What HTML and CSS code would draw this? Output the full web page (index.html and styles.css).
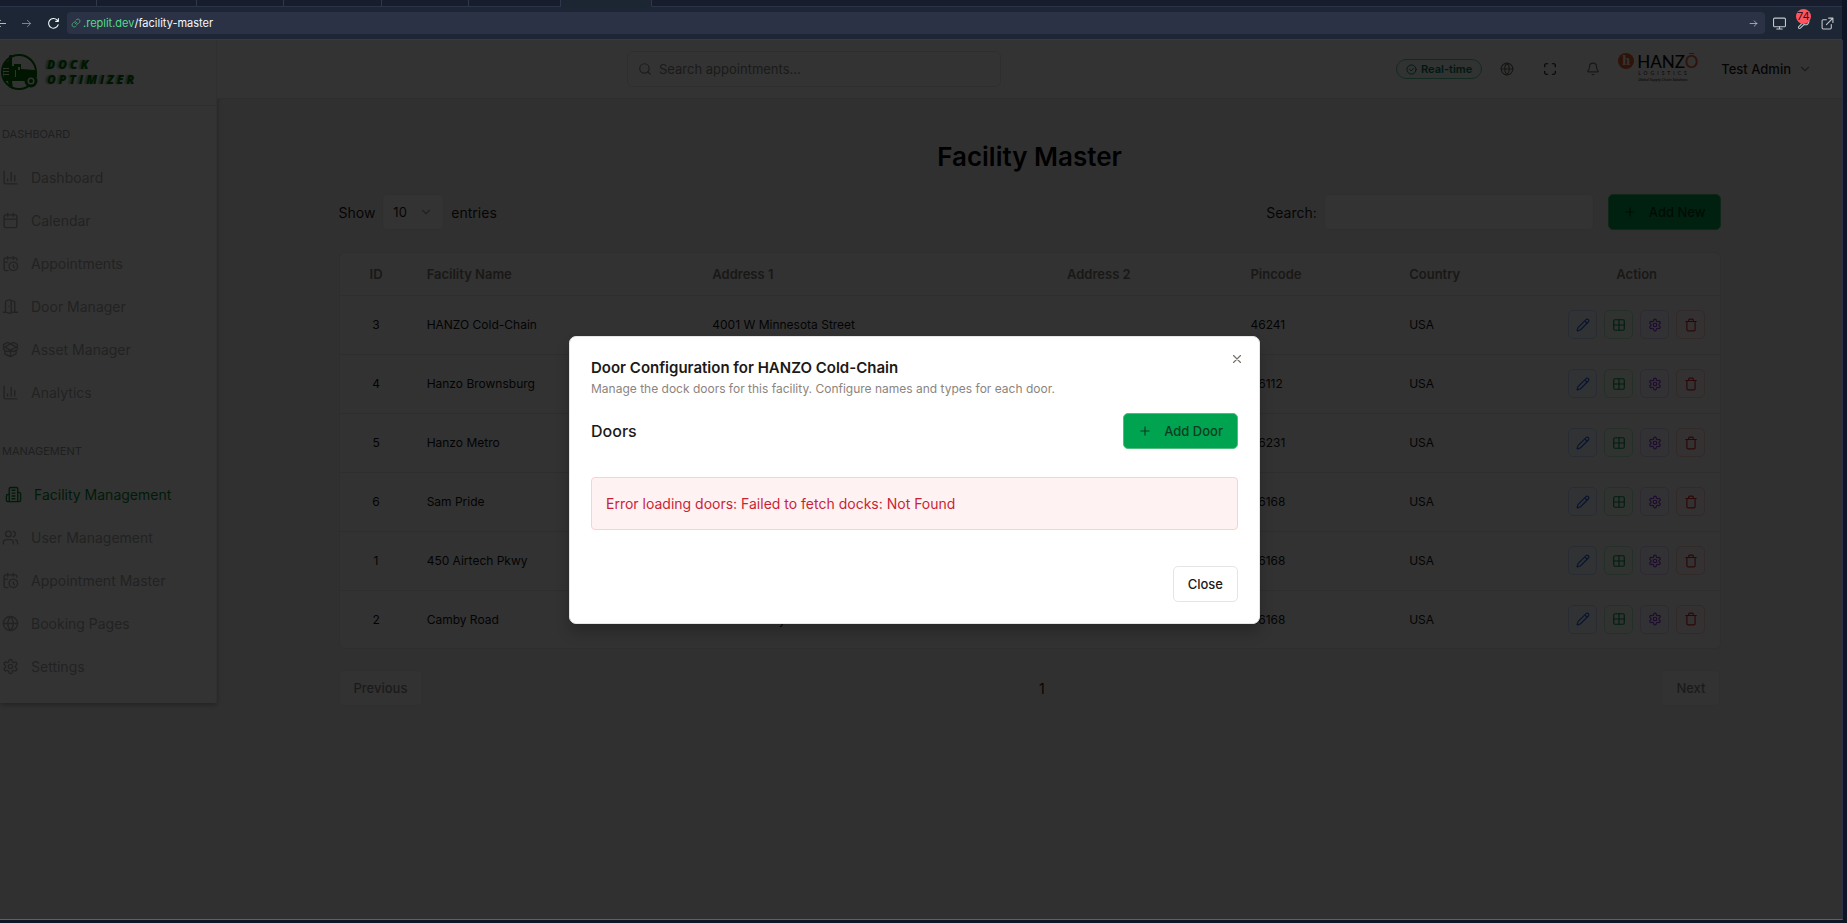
FILE: index.html
```html
<!DOCTYPE html>
<html lang="en">
<head>
<meta charset="utf-8">
<title>Facility Master</title>
<link rel="stylesheet" href="styles.css">
</head>
<body>
<svg class="sprite" aria-hidden="true">
  <symbol id="i-chart" viewBox="0 0 24 24"><path d="M3 3v16a2 2 0 0 0 2 2h16M18 17V9M13 17V5M8 17v-3"/></symbol>
  <symbol id="i-calendar" viewBox="0 0 24 24"><path d="M8 2v4M16 2v4M3 10h18"/><rect width="18" height="18" x="3" y="4" rx="2"/></symbol>
  <symbol id="i-calclock" viewBox="0 0 24 24"><path d="M21 7.5V6a2 2 0 0 0-2-2H5a2 2 0 0 0-2 2v14a2 2 0 0 0 2 2h3.500M16 2v4M8 2v4M3 10h5M17.500 17.500 16 16.300V14"/><circle cx="16" cy="16" r="6"/></symbol>
  <symbol id="i-door" viewBox="0 0 24 24"><path d="M13 4h3a2 2 0 0 1 2 2v14M2 20h3M13 20h9M10 12v.01M13 4.560v16.160a1 1 0 0 1-1.240.970L5 20V5.560a2 2 0 0 1 1.520-1.940l4-1A2 2 0 0 1 13 4.560Z"/></symbol>
  <symbol id="i-box" viewBox="0 0 24 24"><path d="M12 22v-9M15.170 2.210a1.670 1.670 0 0 1 1.630 0L21 4.570a1.930 1.930 0 0 1 0 3.360L8.820 14.790a1.655 1.655 0 0 1-1.640 0L3 12.430a1.930 1.930 0 0 1 0-3.360zM20 13v3.870a2.060 2.060 0 0 1-1.110 1.830l-6 3.080a1.930 1.930 0 0 1-1.780 0l-6-3.080A2.060 2.060 0 0 1 4 16.870V13M21 12.430a1.930 1.930 0 0 0 0-3.360L8.830 2.200a1.640 1.640 0 0 0-1.630 0L3 4.570a1.930 1.930 0 0 0 0 3.360l12.180 6.860a1.636 1.636 0 0 0 1.630 0z"/></symbol>
  <symbol id="i-building" viewBox="0 0 24 24"><path d="M6 22V4a2 2 0 0 1 2-2h8a2 2 0 0 1 2 2v18ZM6 12H4a2 2 0 0 0-2 2v6a2 2 0 0 0 2 2h2M18 9h2a2 2 0 0 1 2 2v9a2 2 0 0 1-2 2h-2M10 6h4M10 10h4M10 14h4M10 18h4"/></symbol>
  <symbol id="i-users" viewBox="0 0 24 24"><path d="M16 21v-2a4 4 0 0 0-4-4H6a4 4 0 0 0-4 4v2M22 21v-2a4 4 0 0 0-3-3.870M16 3.130a4 4 0 0 1 0 7.750"/><circle cx="9" cy="7" r="4"/></symbol>
  <symbol id="i-globe" viewBox="0 0 24 24"><circle cx="12" cy="12" r="10"/><path d="M12 2a14.500 14.500 0 0 0 0 20 14.500 14.500 0 0 0 0-20M2 12h20"/></symbol>
  <symbol id="i-gear" viewBox="0 0 24 24"><path d="M12.220 2h-.44a2 2 0 0 0-2 2v.18a2 2 0 0 1-1 1.730l-.43.25a2 2 0 0 1-2 0l-.15-.08a2 2 0 0 0-2.730.73l-.22.38a2 2 0 0 0 .73 2.730l.15.1a2 2 0 0 1 1 1.720v.51a2 2 0 0 1-1 1.740l-.15.09a2 2 0 0 0-.73 2.730l.22.38a2 2 0 0 0 2.730.73l.15-.08a2 2 0 0 1 2 0l.43.25a2 2 0 0 1 1 1.730V20a2 2 0 0 0 2 2h.44a2 2 0 0 0 2-2v-.18a2 2 0 0 1 1-1.730l.43-.25a2 2 0 0 1 2 0l.15.08a2 2 0 0 0 2.730-.73l.22-.39a2 2 0 0 0-.73-2.730l-.15-.08a2 2 0 0 1-1-1.740v-.5a2 2 0 0 1 1-1.740l.15-.09a2 2 0 0 0 .73-2.730l-.22-.38a2 2 0 0 0-2.730-.73l-.15.08a2 2 0 0 1-2 0l-.43-.25a2 2 0 0 1-1-1.730V4a2 2 0 0 0-2-2z"/><circle cx="12" cy="12" r="3"/></symbol>
  <symbol id="i-search" viewBox="0 0 24 24"><circle cx="11" cy="11" r="8"/><path d="m21 21-4.300-4.300"/></symbol>
  <symbol id="i-check" viewBox="0 0 24 24"><circle cx="12" cy="12" r="10"/><path d="m8 12 3 3 5-5"/></symbol>
  <symbol id="i-expand" viewBox="0 0 24 24"><path d="M8 3H5a2 2 0 0 0-2 2v3M21 8V5a2 2 0 0 0-2-2h-3M3 16v3a2 2 0 0 0 2 2h3M16 21h3a2 2 0 0 0 2-2v-3"/></symbol>
  <symbol id="i-bell" viewBox="0 0 24 24"><path d="M10.300 21a2 2 0 0 0 3.400 0M3.260 15.330A1 1 0 0 0 4 17h16a1 1 0 0 0 .74-1.670C19.410 13.960 18 12.500 18 8A6 6 0 0 0 6 8c0 4.500-1.410 5.960-2.740 7.330"/></symbol>
  <symbol id="i-down" viewBox="0 0 24 24"><path d="m6 9 6 6 6-6"/></symbol>
  <symbol id="i-plus" viewBox="0 0 24 24"><path d="M5 12h14M12 5v14"/></symbol>
  <symbol id="i-x" viewBox="0 0 24 24"><path d="M18 6 6 18M6 6l12 12"/></symbol>
  <symbol id="i-pencil" viewBox="0 0 24 24"><path d="M21.170 6.810a1 1 0 0 0-3.990-3.990L3.840 16.170a2 2 0 0 0-.5.830l-1.320 4.350a.5.5 0 0 0 .62.620l4.350-1.320a2 2 0 0 0 .83-.5zM15 5l4 4"/></symbol>
  <symbol id="i-grid" viewBox="0 0 24 24"><rect width="18" height="18" x="3" y="3" rx="2"/><path d="M3 12h18M12 3v18"/></symbol>
  <symbol id="i-trash" viewBox="0 0 24 24"><path d="M3 6h18M19 6v14a2 2 0 0 1-2 2H7a2 2 0 0 1-2-2V6M8 6V4a2 2 0 0 1 2-2h4a2 2 0 0 1 2 2v2"/></symbol>
  <symbol id="i-left" viewBox="0 0 24 24"><path d="M21 12H3M10 5l-7 7 7 7"/></symbol>
  <symbol id="i-right" viewBox="0 0 24 24"><path d="M3 12h18M14 5l7 7-7 7"/></symbol>
  <symbol id="i-reload" viewBox="0 0 24 24"><path d="M20.500 14.500A9 9 0 1 1 18.500 5.500L21 8M21 3v5h-5"/></symbol>
  <symbol id="i-link" viewBox="0 0 24 24"><path d="M10 13a5 5 0 0 0 7.500.5l3-3a5 5 0 0 0-7-7l-1.700 1.700M14 11a5 5 0 0 0-7.500-.5l-3 3a5 5 0 0 0 7 7l1.700-1.700"/></symbol>
  <symbol id="i-monitor" viewBox="0 0 24 24"><rect x="1" y="2" width="22" height="16" rx="2"/><path d="M12 18v4M7 22h10"/></symbol>
  <symbol id="i-wrench" viewBox="0 0 24 24"><path d="M14.500 6.500a1 1 0 0 0 0 1.400l1.600 1.600a1 1 0 0 0 1.400 0l3.800-3.800a6 6 0 0 1-8 8l-7 7a2 2 0 0 1-3-3l7-7a6 6 0 0 1 8-8z"/></symbol>
  <symbol id="i-popout" viewBox="0 0 24 24"><path d="M14 2h8v8M22 2 10 14M10 5H4a2 2 0 0 0-2 2v13a2 2 0 0 0 2 2h13a2 2 0 0 0 2-2v-6"/></symbol>
</svg>

<div class="browser">
  <div class="tabs"><span class="tab t1"></span><span class="tab t2"></span><span class="tab t3"></span><span class="tab t4"></span><span class="tab t3"></span><span class="tab t5"></span><span class="tab active"></span><span class="tab rest"></span></div>
  <div class="toolbar">
    <button class="tool back" aria-label="Back"><svg class="icon"><use href="#i-left"/></svg></button>
    <button class="tool forward" aria-label="Forward"><svg class="icon"><use href="#i-right"/></svg></button>
    <button class="tool reload" aria-label="Reload"><svg class="icon"><use href="#i-reload"/></svg></button>
    <div class="address"><svg class="icon link"><use href="#i-link"/></svg><span class="host">.replit.dev</span><span class="path">/facility-master</span><svg class="icon go"><use href="#i-right"/></svg></div>
    <button class="tool" aria-label="Screen size"><svg class="icon"><use href="#i-monitor"/></svg></button>
    <button class="tool dev" aria-label="Developer tools"><svg class="icon"><use href="#i-wrench"/></svg><span class="count">74</span></button>
    <button class="tool" aria-label="Open in new tab"><svg class="icon"><use href="#i-popout"/></svg></button>
  </div>

  <div class="view">
    <div class="app">
      <aside class="sidebar">
        <a class="logo" href="#" aria-label="Dock Optimizer">
          <svg class="logo-mark" viewBox="0 0 38 38"><circle cx="19" cy="19" r="17" fill="none" stroke="currentColor" stroke-width="2"/><path fill="currentColor" d="M3 12 9 7V3l1-1h2v11h2v-2h7v5l14 1 2 2v5l-2 1a6 6 0 0 0-10 3H12l1 8-4-2-1-6H4z"/><path fill="#fff" d="M15 17h1v7h-1zM18 14h2v3h-2zM3 15h6v1H3zM3 18h6v1H3zM3 21h6v1H3z"/><circle cx="31" cy="28" r="5" fill="#fff" stroke="currentColor" stroke-width="3"/><circle cx="31" cy="28" r="2" fill="currentColor"/></svg>
          <span class="logo-text"><span>DOCK</span><span>OPTIMIZER</span></span>
        </a>
        <nav class="nav">
          <h2>DASHBOARD</h2>
          <a href="#"><svg class="icon"><use href="#i-chart"/></svg>Dashboard</a>
          <a href="#"><svg class="icon"><use href="#i-calendar"/></svg>Calendar</a>
          <a href="#"><svg class="icon"><use href="#i-calclock"/></svg>Appointments</a>
          <a href="#"><svg class="icon"><use href="#i-door"/></svg>Door Manager</a>
          <a href="#"><svg class="icon"><use href="#i-box"/></svg>Asset Manager</a>
          <a href="#"><svg class="icon"><use href="#i-chart"/></svg>Analytics</a>
        </nav>
        <nav class="nav">
          <h2>MANAGEMENT</h2>
          <a href="#" class="current"><svg class="icon"><use href="#i-building"/></svg>Facility Management</a>
          <a href="#"><svg class="icon"><use href="#i-users"/></svg>User Management</a>
          <a href="#"><svg class="icon"><use href="#i-calclock"/></svg>Appointment Master</a>
          <a href="#"><svg class="icon"><use href="#i-globe"/></svg>Booking Pages</a>
          <a href="#"><svg class="icon"><use href="#i-gear"/></svg>Settings</a>
        </nav>
      </aside>

      <div class="column">
        <header class="header">
          <label class="search"><svg class="icon"><use href="#i-search"/></svg><input type="search" placeholder="Search appointments..." aria-label="Search appointments"></label>
          <div class="header-tools">
            <span class="badge"><svg class="icon"><use href="#i-check"/></svg>Real-time</span>
            <button class="ghost" aria-label="Language"><svg class="icon"><use href="#i-globe"/></svg></button>
            <button class="ghost dark" aria-label="Full screen"><svg class="icon"><use href="#i-expand"/></svg></button>
            <button class="ghost" aria-label="Notifications"><svg class="icon"><use href="#i-bell"/></svg></button>
            <div class="hanzo">
              <span class="hanzo-mark">h</span>
              <span class="hanzo-text"><b>HANZ<i>Ō</i></b><span class="sub">LOGISTICS</span><em>Global Supply Chain Solutions</em></span>
            </div>
            <button class="user">Test Admin<svg class="icon"><use href="#i-down"/></svg></button>
          </div>
        </header>

        <main class="main">
          <h1>Facility Master</h1>
          <div class="controls">
            <label class="show">Show <span class="select"><select><option>10</option></select><svg class="icon"><use href="#i-down"/></svg></span> entries</label>
            <div class="right">
              <label class="find">Search: <input type="text"></label>
              <button class="primary"><svg class="icon"><use href="#i-plus"/></svg>Add New</button>
            </div>
          </div>
          <div class="card">
            <table>
              <colgroup><col class="c-id"><col class="c-name"><col class="c-addr"><col class="c-addr2"><col class="c-pin"><col class="c-country"><col class="c-action"></colgroup>
              <thead><tr><th class="mid">ID</th><th>Facility Name</th><th>Address 1</th><th>Address 2</th><th>Pincode</th><th>Country</th><th class="mid">Action</th></tr></thead>
              <tbody>
                <tr><td class="mid">3</td><td>HANZO Cold-Chain</td><td>4001 W Minnesota Street</td><td></td><td>46241</td><td>USA</td><td><div class="actions"><button class="edit" aria-label="Edit"><svg class="icon"><use href="#i-pencil"/></svg></button><button class="doors" aria-label="Doors"><svg class="icon"><use href="#i-grid"/></svg></button><button class="config" aria-label="Settings"><svg class="icon"><use href="#i-gear"/></svg></button><button class="delete" aria-label="Delete"><svg class="icon"><use href="#i-trash"/></svg></button></div></td></tr>
                <tr><td class="mid">4</td><td>Hanzo Brownsburg</td><td></td><td></td><td>46112</td><td>USA</td><td><div class="actions"><button class="edit" aria-label="Edit"><svg class="icon"><use href="#i-pencil"/></svg></button><button class="doors" aria-label="Doors"><svg class="icon"><use href="#i-grid"/></svg></button><button class="config" aria-label="Settings"><svg class="icon"><use href="#i-gear"/></svg></button><button class="delete" aria-label="Delete"><svg class="icon"><use href="#i-trash"/></svg></button></div></td></tr>
                <tr><td class="mid">5</td><td>Hanzo Metro</td><td></td><td></td><td>46231</td><td>USA</td><td><div class="actions"><button class="edit" aria-label="Edit"><svg class="icon"><use href="#i-pencil"/></svg></button><button class="doors" aria-label="Doors"><svg class="icon"><use href="#i-grid"/></svg></button><button class="config" aria-label="Settings"><svg class="icon"><use href="#i-gear"/></svg></button><button class="delete" aria-label="Delete"><svg class="icon"><use href="#i-trash"/></svg></button></div></td></tr>
                <tr><td class="mid">6</td><td>Sam Pride</td><td></td><td></td><td>46168</td><td>USA</td><td><div class="actions"><button class="edit" aria-label="Edit"><svg class="icon"><use href="#i-pencil"/></svg></button><button class="doors" aria-label="Doors"><svg class="icon"><use href="#i-grid"/></svg></button><button class="config" aria-label="Settings"><svg class="icon"><use href="#i-gear"/></svg></button><button class="delete" aria-label="Delete"><svg class="icon"><use href="#i-trash"/></svg></button></div></td></tr>
                <tr><td class="mid">1</td><td>450 Airtech Pkwy</td><td></td><td></td><td>46168</td><td>USA</td><td><div class="actions"><button class="edit" aria-label="Edit"><svg class="icon"><use href="#i-pencil"/></svg></button><button class="doors" aria-label="Doors"><svg class="icon"><use href="#i-grid"/></svg></button><button class="config" aria-label="Settings"><svg class="icon"><use href="#i-gear"/></svg></button><button class="delete" aria-label="Delete"><svg class="icon"><use href="#i-trash"/></svg></button></div></td></tr>
                <tr><td class="mid">2</td><td>Camby Road</td><td>8600 Camby Road</td><td></td><td>46168</td><td>USA</td><td><div class="actions"><button class="edit" aria-label="Edit"><svg class="icon"><use href="#i-pencil"/></svg></button><button class="doors" aria-label="Doors"><svg class="icon"><use href="#i-grid"/></svg></button><button class="config" aria-label="Settings"><svg class="icon"><use href="#i-gear"/></svg></button><button class="delete" aria-label="Delete"><svg class="icon"><use href="#i-trash"/></svg></button></div></td></tr>
              </tbody>
            </table>
          </div>
          <div class="pager"><button class="outline" disabled>Previous</button><span>1</span><button class="outline" disabled>Next</button></div>
        </main>
      </div>
    </div>

    <div class="overlay">
      <section class="dialog" role="dialog" aria-labelledby="dialog-title">
        <button class="dismiss" aria-label="Dismiss"><svg class="icon"><use href="#i-x"/></svg></button>
        <h2 id="dialog-title">Door Configuration for HANZO Cold-Chain</h2>
        <p class="hint">Manage the dock doors for this facility. Configure names and types for each door.</p>
        <div class="dialog-bar"><h3>Doors</h3><button class="primary"><svg class="icon"><use href="#i-plus"/></svg>Add Door</button></div>
        <p class="error">Error loading doors: Failed to fetch docks: Not Found</p>
        <div class="dialog-foot"><button class="outline">Close</button></div>
      </section>
    </div>
  </div>
</div>
</body>
</html>
```
FILE: styles.css
```css
* { box-sizing: border-box; }
body, h1, h2, h3, p { margin: 0; }
body { font-family: Inter, "Liberation Sans", sans-serif; font-size: 14px; color: #1c1917; background: #0e1525; }
button, input, select { font: inherit; color: inherit; margin: 0; }
button { display: inline-flex; align-items: center; justify-content: center; padding: 0; border: 0; background: none; }
a { color: inherit; text-decoration: none; }
.sprite { display: none; }
.icon { flex: none; width: 18px; height: 18px; fill: none; stroke: currentColor; stroke-width: 2; stroke-linecap: round; stroke-linejoin: round; }

/* Browser frame */
.browser { display: flex; flex-direction: column; height: 100vh; overflow: hidden; }
.tabs { display: flex; height: 7px; background: #171d2d; margin-right: 5px; }
.tab { flex: none; border-right: 1px solid #2f384b; border-bottom: 1px solid #2b3447; }
.t1 { width: 97px; }
.t2 { width: 100px; }
.t3 { width: 87px; }
.t4 { width: 98px; }
.t5 { width: 92px; }
.tab.active { width: 91px; background: #1c2633; border-bottom-color: #1c2633; }
.tab.rest { flex: 1; border-right: 0; }
.toolbar { display: flex; align-items: center; height: 33px; margin-right: 5px; padding-right: 3px; background: #1c2634; border-bottom: 1px solid #2b3b5b; color: #c2c8cc; }
.tool { width: 24px; height: 24px; }
.tool .icon { width: 13px; height: 13px; }
.tool.back { width: 7px; justify-content: flex-end; overflow: hidden; }
.tool.back .icon { width: 11px; height: 11px; }
.tool.forward { width: 38px; color: #828c99; }
.tool.forward .icon { width: 11px; height: 11px; }
.tool.reload { width: 16px; color: #f5f9fc; }
.address { display: flex; align-items: center; flex: 1; height: 22px; margin: 0 2px 0 6px; padding: 0 7px 0 4px; border-radius: 4px; background: #2b3245; font-size: 11px; }
.address .link { width: 10px; height: 10px; margin-right: 2px; color: #44b36c; }
.host { color: #57d98a; }
.path { color: #f5f9fc; }
.address .go { width: 9px; height: 9px; margin-left: auto; }
.dev { position: relative; }
.count { position: absolute; top: -2px; left: 5px; height: 15px; padding: 0 1px; border-radius: 8px; background: #ff5560; color: #38101a; font-size: 11px; line-height: 15px; }
.view { position: relative; flex: 1; margin: 0 4px 3px 0; border-right: 1px solid #2b3245; border-bottom: 1px solid #5f6062; overflow: hidden; background: #f1f1f1; }

/* App shell */
.app { display: flex; align-items: flex-start; height: 100%; }
.sidebar { width: 217px; flex: none; padding-bottom: 15px; background: #fff; box-shadow: 0 2px 5px rgba(0, 0, 0, .3); border-right: 1px solid #eee; }
.logo { display: flex; align-items: center; gap: 9px; height: 66px; padding-bottom: 2px; border-bottom: 1px solid #e5e5e5; color: #006f08; }
.logo-mark { width: 38px; height: 38px; }
.logo-text { display: flex; flex-direction: column; font: italic 900 12px/15px "Open Sans", sans-serif; letter-spacing: 3px; }
.logo-text span { width: max-content; text-shadow: -2px 0 2px rgba(0, 111, 8, .5); }
.nav { padding-top: 18px; color: #aaa; }
.nav + .nav { padding-top: 27px; }
.nav h2 { padding: 0 0 12px 2px; font-size: 11px; font-weight: 400; line-height: 20px; color: #999; }
.nav a { display: flex; align-items: center; gap: 12px; height: 43px; padding-left: 2px; }
.nav .icon { width: 17px; height: 17px; }
.nav .current { padding-left: 5px; color: #008b30; }

.column { flex: 1; min-width: 0; }
.header { display: flex; align-items: center; justify-content: space-between; height: 59px; padding: 0 30px 0 410px; background: #fff; border-bottom: 1px solid #e5e5e5; }
.search { display: flex; align-items: center; gap: 7px; width: 374px; height: 36px; padding: 0 10px; border: 1px solid #e5e5e5; border-radius: 6px; color: #888; }
.search .icon { width: 14px; height: 14px; }
.search input { flex: 1; min-width: 0; padding: 0; border: 0; outline: 0; background: none; font-size: 13px; }
.search input::placeholder { color: #8a8580; opacity: 1; }
.header-tools { display: flex; align-items: center; color: #77716c; }
.badge { display: flex; align-items: center; gap: 4px; height: 20px; margin-right: 3px; padding: 0 9px; border: 1px solid #62cc99; border-radius: 10px; background: #effcf6; color: #047857; font-size: 11px; font-weight: 600; }
.badge .icon { width: 11px; height: 11px; }
.ghost { width: 43px; height: 36px; }
.ghost .icon { width: 14px; height: 14px; }
.ghost.dark { color: #111; }
.hanzo { display: flex; width: 78px; height: 32px; margin-left: 4px; color: #111; }
.hanzo-mark { flex: none; width: 16px; height: 16px; border-radius: 50%; background: #e8622a; color: #fff; font: 700 14px/15px "Liberation Serif", serif; text-align: center; }
.hanzo-text { display: flex; flex-direction: column; padding-left: 3px; white-space: nowrap; }
.hanzo b { font: 500 17px/17px Lato, sans-serif; }
.hanzo i { font-style: normal; color: #e8622a; }
.hanzo .sub { padding-left: 1px; font: 5px/7px Lato, sans-serif; letter-spacing: 3px; }
.hanzo em { padding-left: 1px; font: italic 4px/6px Lato, sans-serif; }
.user { gap: 7px; margin-left: 25px; font-size: 13px; font-weight: 500; color: #1c1917; }
.user .icon { width: 14px; height: 14px; color: #888; }

.main { max-width: 1382px; margin: 0 auto; padding-top: 40px; }
h1 { font-size: 26px; line-height: 36px; font-weight: 600; text-align: center; color: #000; }
.controls { display: flex; align-items: center; justify-content: space-between; margin: 19px 0 22px; }
.show, .find { display: flex; align-items: center; gap: 7px; }
.select { display: flex; align-items: center; position: relative; width: 62px; height: 36px; border: 1px solid #e7e5e4; border-radius: 5px; background: #fff; font-size: 13px; }
.select select { width: 100%; height: 100%; padding-left: 10px; border: 0; appearance: none; background: none; }
.select .icon { position: absolute; right: 10px; width: 14px; height: 14px; color: #999; }
.right { display: flex; gap: 14px; }
.find input { width: 270px; height: 36px; border: 1px solid #e7e5e4; border-radius: 5px; background: #fff; }
.primary { gap: 12px; height: 36px; padding: 0 14px; border: 1px solid #50bd7e; border-radius: 5px; background: #00a350; color: #0d3d20; font-size: 13px; font-weight: 500; }
.primary .icon { width: 14px; height: 14px; }

.card { border: 1px solid #e3e3e3; border-radius: 6px; background: #f8f8f8; overflow: hidden; }
table { width: 100%; border-collapse: collapse; table-layout: fixed; }
.c-id { width: 5.3%; }
.c-name { width: 20.7%; }
.c-addr { width: 25.7%; }
.c-addr2 { width: 13.3%; }
.c-pin { width: 11.5%; }
.c-country { width: 11.5%; }
.c-action { width: 12%; }
th { height: 42px; padding: 0 14px; text-align: left; font-size: 13px; font-weight: 600; color: #807a75; }
td { height: 59px; padding: 0 14px; font-size: 12px; color: #111; }
th, td { border-bottom: 1px solid #e3e3e3; }
tbody tr:last-child td { border-bottom: 0; height: 58px; }
.mid { text-align: center; }
.actions { display: flex; justify-content: center; gap: 7px; }
.actions button { flex: none; width: 29px; height: 29px; border: 1px solid; border-radius: 5px; }
.actions .icon { width: 14px; height: 14px; }
.actions .edit { border-color: #c5dcf8; color: #2563eb; background: #f3f8ff; }
.actions .doors { border-color: #b9ead0; color: #00964a; background: #f3fcf6; }
.actions .config { border-color: #dfcff5; color: #9333ea; background: #faf5ff; }
.actions .delete { border-color: #f8caca; color: #dc2626; background: #fef4f4; }
.outline { height: 36px; padding: 0 14px; border: 1px solid #e7e5e4; border-radius: 5px; background: #fff; font-size: 13px; font-weight: 500; }
.outline:disabled { opacity: .5; }
.pager { display: flex; align-items: center; justify-content: space-between; margin-top: 21px; }

/* Dialog */
.overlay { position: absolute; inset: 0 0 0 -13px; display: grid; place-items: center; background: rgba(0, 0, 0, .8); }
.dialog { position: relative; width: 100%; max-width: 691px; padding: 21px; border: 1px solid #e7e5e4; border-radius: 7px; background: #fff; box-shadow: 0 9px 14px rgba(0, 0, 0, .2); }
.dialog h2 { font-size: 15px; line-height: 20px; font-weight: 600; }
.hint { margin-top: 1px; font-size: 12px; line-height: 20px; color: #8b8480; }
.dialog-bar { display: flex; align-items: center; justify-content: space-between; margin-top: 14px; }
h3 { font-size: 16px; font-weight: 500; }
.error { margin-top: 28px; padding: 15px 14px; border: 1px solid #ffcfcf; border-radius: 4px; background: #fef2f2; color: #cc1f36; line-height: 21px; }
.dialog-foot { display: flex; justify-content: flex-end; margin-top: 36px; }
.dismiss { position: absolute; top: 14px; right: 14px; width: 16px; height: 16px; color: #77716c; }
.dismiss .icon { width: 14px; height: 14px; }
```
